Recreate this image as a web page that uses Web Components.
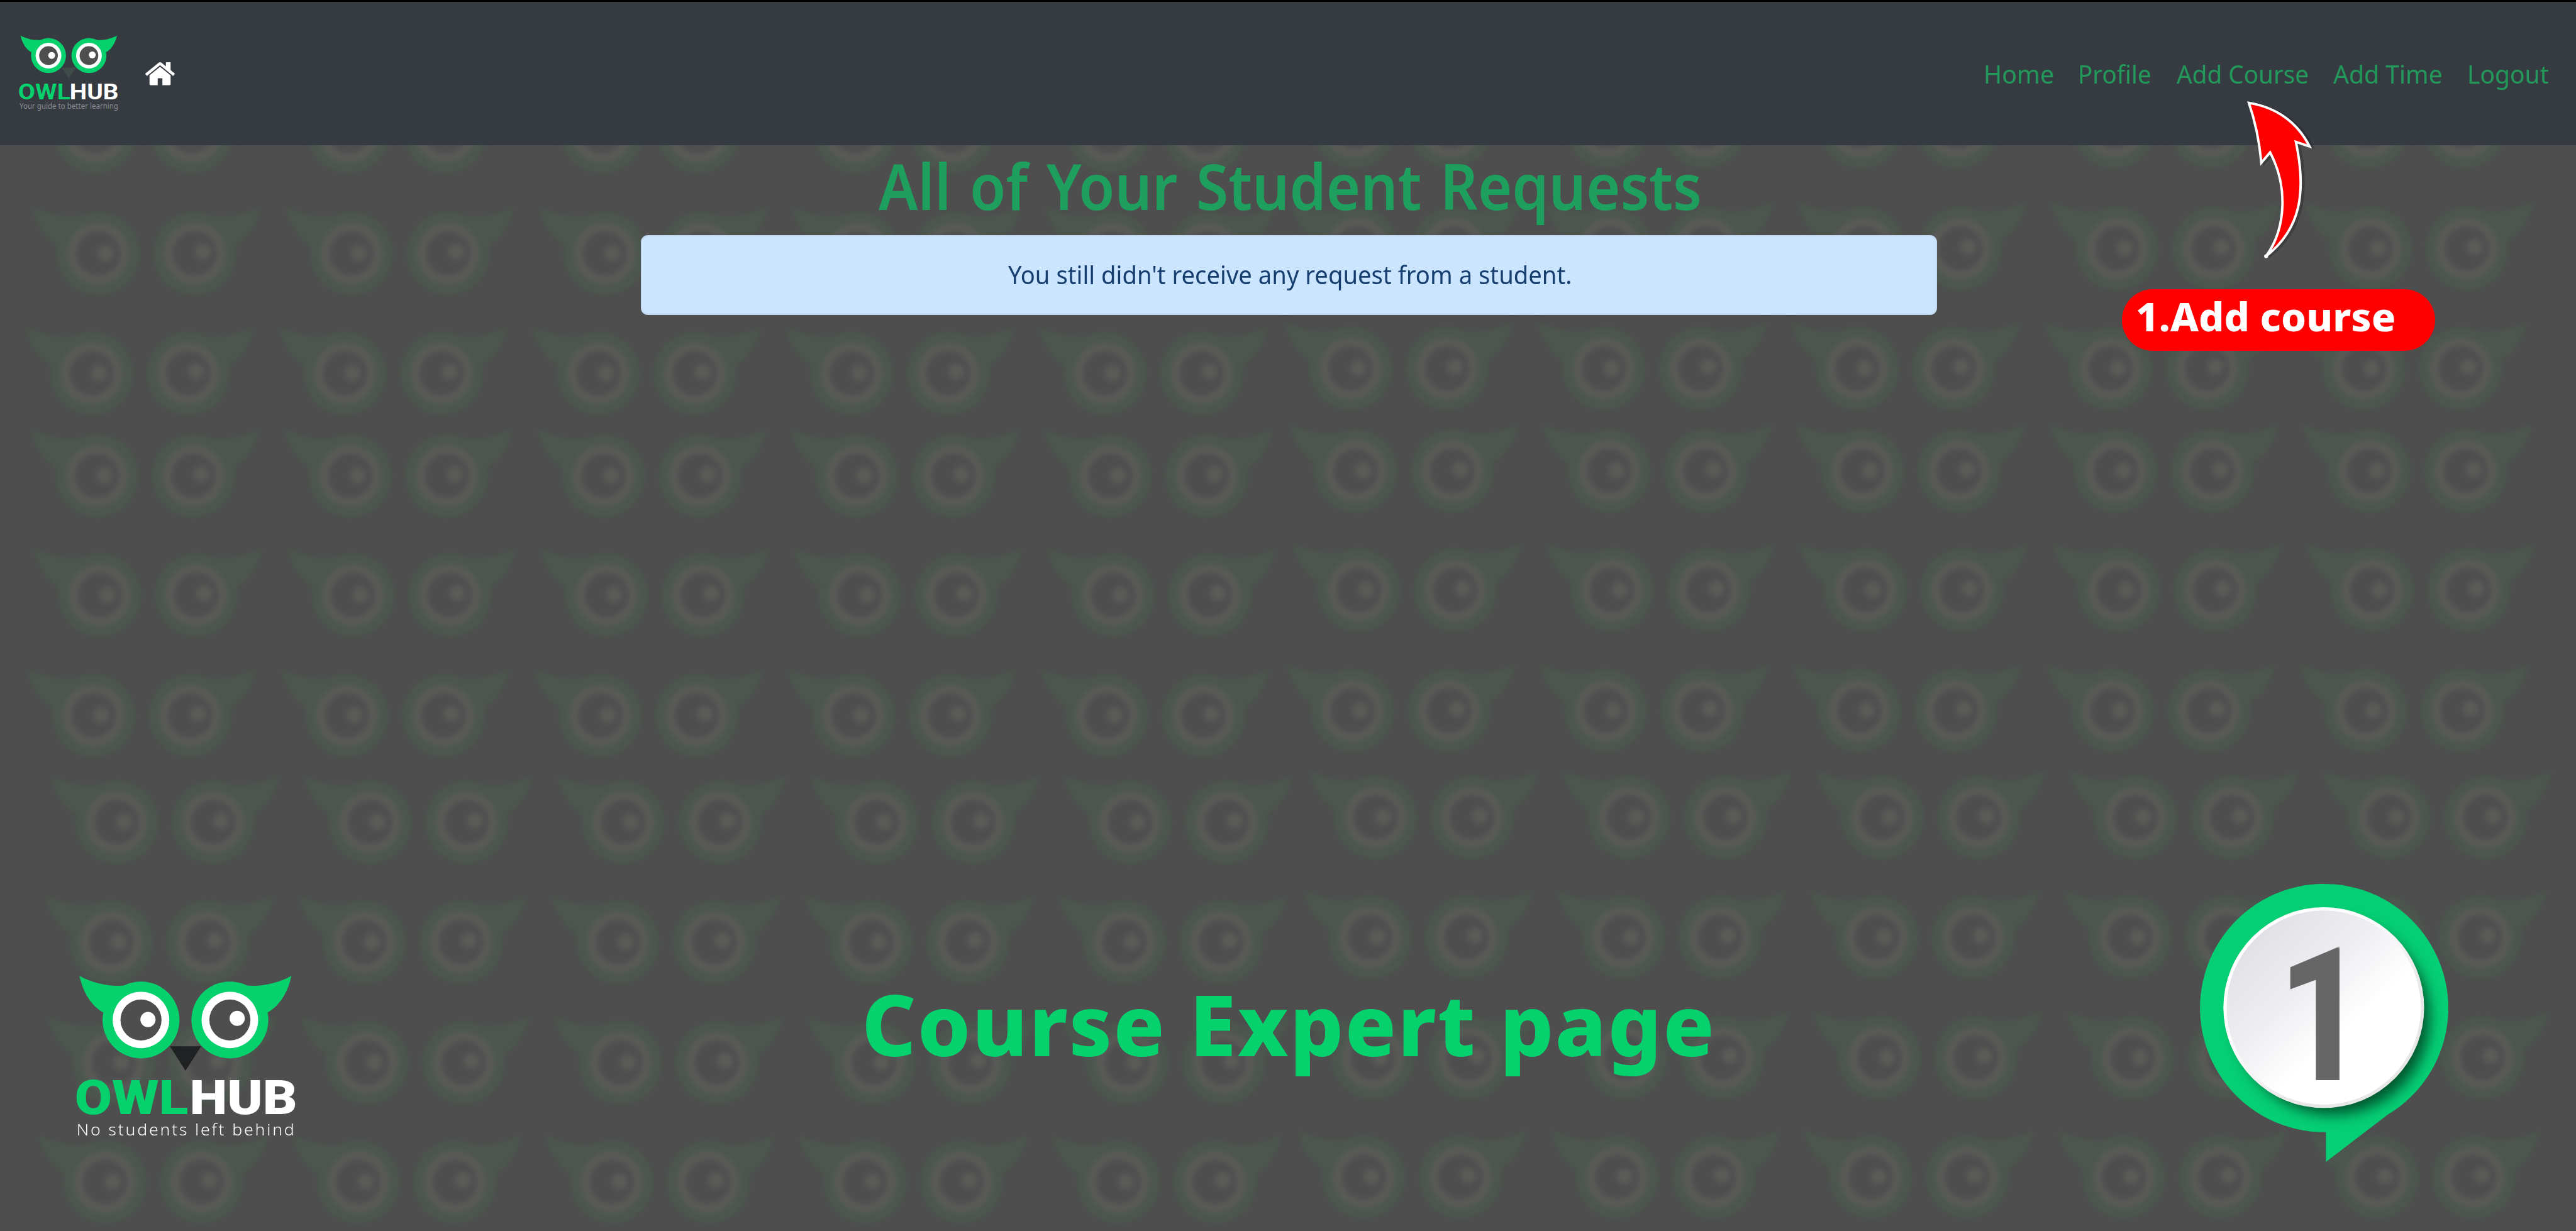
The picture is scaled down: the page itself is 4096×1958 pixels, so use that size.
<!DOCTYPE html>
<html lang="en">
<head>
<meta charset="utf-8">
<title>OwlHub – Course Expert page</title>
<style>
html,body{margin:0;padding:0;background:#4e4e4e}
body{width:4096px;height:1958px;overflow:hidden;font-family:"Noto Sans","Open Sans",sans-serif}
</style>
</head>
<body>
<expert-page></expert-page>
<script>
const define = (name, html, setup) => {
  const t = document.createElement('template');
  t.innerHTML = html.trim();
  customElements.define(name, class extends HTMLElement {
    connectedCallback() {
      if (this.shadowRoot) return;
      this.attachShadow({mode: 'open'}).appendChild(t.content.cloneNode(true));
      if (setup) setup.call(this, this.shadowRoot);
    }
  });
};

/* One line of text whose ink spans exactly the width given in the "w" attribute. */
const canvas = document.createElement('canvas').getContext('2d');
define('fit-text', `
<style>
:host{display:block;white-space:pre;flex:none}
span{display:block;width:max-content;transform-origin:0 50%}
</style><span><slot></slot></span>`, function (root) {
  const w = parseFloat(this.getAttribute('w'));
  this.style.width = w + 'px';
  const cs = getComputedStyle(this);
  canvas.font = `${cs.fontWeight} ${cs.fontSize} ${cs.fontFamily}`;
  canvas.letterSpacing = cs.letterSpacing === 'normal' ? '0px' : cs.letterSpacing;
  canvas.wordSpacing = cs.wordSpacing;
  const m = canvas.measureText(this.textContent);
  const s = w / (m.actualBoundingBoxLeft + m.actualBoundingBoxRight);
  root.querySelector('span').style.transform = `translateX(${m.actualBoundingBoxLeft * s}px) scaleX(${s})`;
});

const WING = 'M-189.5-136C-150-113-98-102-52-106L0 0-116-23C-155-45-178-85-189.500-136Z';
const eye = (x, hx, hy, g, w, p) => `<circle cx="${x}" r="118.3" fill="${g}"/><circle cx="${x}" r="87" fill="${w}"/><circle cx="${x}" r="63.2" fill="${p}"/><circle cx="${x + hx}" cy="${hy}" r="23.4" fill="${w}"/>`;
const owl = (g, w, p) => `<path d="${WING}" fill="${g}"/><path d="${WING}" fill="${g}" transform="matrix(-1 0 0 1 273.5 0)"/>${eye(0, 21.4, -1.2, g, w, p)}${eye(273.5, 22.5, -5, g, w, p)}`;

define('owl-face', `
<style>:host{display:block}svg{display:block;width:100%;height:100%}path.beak{fill:var(--beak,#1f2123)}</style>
<svg viewBox="-192 -138 658 296">${owl('#06d16d', '#fff', '#4e4e4e')}<path class="beak" d="M89 81H185L137 156Z"/></svg>`);

define('owl-logo', `
<style>
:host{display:flex;flex-direction:column;align-items:flex-start;color:#fff;flex:none}
owl-face{width:340px;height:153px;margin-left:4.2px}
.name{display:flex;gap:7.6px;margin-top:6.6px;font:900 75.5px/70px Roboto,sans-serif}
.green{color:#06d16d}
.tag{margin:0 0 0 3px;font:300 25px/30px "Noto Sans","Open Sans",sans-serif;letter-spacing:2.6px}
:host([compact]) owl-face{width:154.7px;height:69.6px;margin-left:2.6px;--beak:#3f4b48}
:host([compact]) .name{gap:1.6px;margin-top:3.3px;font:700 34.7px/34px Roboto,sans-serif}
:host([compact]) .tag{margin:-1.5px 0 0 1.5px;font:400 12px/14px "Noto Sans","Open Sans",sans-serif;letter-spacing:0;color:#8b8d93}
</style>
<owl-face></owl-face><div class="name"></div><div class="tag"></div>`, function (root) {
  const [a, b, c] = this.getAttribute('widths').split(' ');
  root.querySelector('.name').innerHTML = `<fit-text class="green" w="${a}">OWL</fit-text><fit-text w="${b}">HUB</fit-text>`;
  root.querySelector('.tag').innerHTML = `<fit-text w="${c}">${this.getAttribute('tagline')}</fit-text>`;
});

define('owl-backdrop', `
<style>:host{position:absolute;inset:0;display:block}svg{display:block;width:100%;height:100%}</style>
<svg viewBox="0 0 7926 3788" preserveAspectRatio="none"><defs><g id="o" transform="scale(1.086)">${owl('#4c564e', '#5a5a58', '#4e4e4e')}</g></defs><g class="all" style="filter:blur(8px)"></g></svg>`, function (root) {
  /* x and y of the first left eye in every row */
  const rows = [[293, 405], [302, 780], [282, 1149], [298, 1464], [307, 1831], [288, 2202], [359, 2530], [342, 2899], [350, 3270], [323, 3637]];
  let out = '';
  for (const [x, y] of rows)
    for (let i = 0; i < 10; i++)
      out += `<use href="#o" x="${x + i * 779.5 - (i > 4 ? 24 : 0)}" y="${y - (i > 4 ? 15 : 0)}"/>`;
  root.querySelector('.all').innerHTML = out;
});

define('nav-bar', `
<style>
:host{display:flex;box-sizing:border-box;height:231px;border-top:3px solid #000;background:#363a41;position:relative}
owl-logo{margin:53.3px 0 0 29.5px}
.home{display:block;width:47px;height:36.5px;margin:96px 0 0 43.4px}
nav{display:flex;margin:90px 43.4px 0 auto;font-size:39.3px;line-height:50px;color:#23985b}
</style>
<owl-logo compact widths="82.3 74.2 156.6" tagline="Your guide to better learning"></owl-logo>
<svg class="home" viewBox="25 253 1614 1283" preserveAspectRatio="none"><path fill="#fff" d="M1408 992v480q0 26-19 45t-45 19h-384v-384h-256v384h-384q-26 0-45-19t-19-45v-480q0-1 .5-3t.5-3l575-474 575 474q1 2 1 6zm223-69l-62 74q-8 9-21 11h-3q-13 0-21-7l-692-577-692 577q-12 8-24 7-13-2-21-11l-62-74q-8-10-7-23.500t11-21.500l719-599q32-26 76-26t76 26l244 204v-195q0-14 9-23t23-9h192q14 0 23 9t9 23v408l219 182q10 8 11 21.500t-7 23.500z"/></svg>
<nav>
<fit-text w="108">Home</fit-text>
<fit-text w="112.500" style="margin-left:42.500px">Profile</fit-text>
<fit-text w="209" style="margin-left:41.500px">Add Course</fit-text>
<fit-text w="172.600" style="margin-left:40px">Add Time</fit-text>
<fit-text w="126.600" style="margin-left:43.400px">Logout</fit-text>
</nav>`);

define('alert-box', `
<style>
:host{display:flex;justify-content:center;align-items:center;box-sizing:border-box;width:2061.500px;height:126.500px;border:2px solid #c3d9f1;border-radius:11px;background:#cbe5ff;color:#163f70;font-size:39.500px;line-height:50px}
</style><slot></slot>`);

define('step-pill', `
<style>
:host{display:flex;box-sizing:border-box;width:498px;height:98.500px;padding:13.500px 25px;border-radius:50px;background:#fe0000;color:#fff;font:800 63px/60px "Noto Sans","Open Sans",sans-serif;letter-spacing:0}
</style><slot></slot>`);

define('step-arrow', `
<style>:host{display:block}svg{display:block;width:100%;height:100%}</style>
<svg viewBox="6900 300 230 510"><defs><path id="a" d="M6919 316.700C7003 330 7068 376 7105.700 450.700L7063.700 436.700C7096 590 7080 704 6971.700 789C7036 700 7038 570 6984.300 469.300L6957.300 501C6951 430 6938 372 6919 316.700Z"/></defs>
<use href="#a" x="9" y="2" fill="#000" stroke="#000" stroke-width="7.500" opacity=".2"/>
<circle cx="6972" cy="788.500" r="6" fill="#fff"/>
<use href="#a" fill="#fe0000" stroke="#fff" stroke-width="7.500"/></svg>`);

define('step-badge', `
<style>:host{display:block;width:408.300px;height:454.800px;flex:none}svg{display:block;width:100%;height:100%}text{font-family:Roboto,sans-serif;font-weight:800}</style>
<svg viewBox="6760 2715 790 880">
<defs>
<path id="p" d="M7157.500 3486.500A382 382 0 1 1 7348.600 3432L7157.500 3578Z"/>
<clipPath id="c"><use href="#p"/></clipPath>
<linearGradient id="d" x1=".15" y1=".12" x2=".85" y2=".88"><stop offset="0" stop-color="#e0e0e6"/><stop offset=".35" stop-color="#eeeef2"/><stop offset=".65" stop-color="#fff"/></linearGradient>
<linearGradient id="r" x1=".15" y1=".12" x2=".85" y2=".88"><stop offset="0" stop-color="#fff"/><stop offset=".35" stop-color="#fcfcfc"/><stop offset=".75" stop-color="#e7e7e7"/></linearGradient>
<filter id="b" x="-20%" y="-20%" width="140%" height="140%"><feGaussianBlur stdDeviation="22"/></filter>
</defs>
<use href="#p" fill="#05cf74"/>
<g clip-path="url(#c)"><circle cx="7179" cy="3135" r="298" fill="#00542f" filter="url(#b)"/></g>
<circle cx="7150.700" cy="3103.300" r="308.900" fill="url(#r)"/>
<circle cx="7150.700" cy="3103.300" r="298.700" fill="url(#d)"/>
<text id="n" font-size="574" fill="#666">1</text>
</svg>`, function (root) {
  /* stretch the numeral so that its ink fills 156 units */
  canvas.font = '800 574px Roboto';
  canvas.letterSpacing = '0px';
  const m = canvas.measureText('1');
  const s = 156 / (m.actualBoundingBoxLeft + m.actualBoundingBoxRight);
  root.querySelector('text').setAttribute('transform', `translate(${7046 + m.actualBoundingBoxLeft * s} 3326.5) scale(${s} 1)`);
});

define('expert-page', `
<style>
:host{display:flex;flex-direction:column;position:relative;width:4096px;height:1958px;background:#4e4e4e;overflow:hidden}
main{display:flex;flex-direction:column;align-items:center;position:relative}
h1{margin:0;padding:3.500px 0 0 3px;height:143.200px;box-sizing:border-box;font:560 101px/120px "Noto Sans","Open Sans",sans-serif;word-spacing:6px;color:#1e9f5d}
alert-box{margin-left:3px}
.over{position:absolute}
step-arrow{left:3565.800px;top:155px;width:118.900px;height:263.600px}
step-pill{left:3374px;top:459.700px}
footer{display:flex;align-items:flex-start;position:relative;margin-top:auto;height:555px}
footer owl-logo{margin:148px 0 0 120.900px;width:349px}
h2{margin:135px 0 0 907px;font:800 134px/180px "Noto Sans","Open Sans",sans-serif;letter-spacing:2px;color:#06d16d}
step-badge{margin-left:773px;margin-top:-1px}
</style>
<owl-backdrop></owl-backdrop>
<nav-bar></nav-bar>
<main>
<h1><fit-text w="1305.500">All of Your Student Requests</fit-text></h1>
<alert-box><fit-text w="894">You still didn't receive any request from a student.</fit-text></alert-box>
</main>
<step-arrow class="over"></step-arrow>
<step-pill class="over"><fit-text w="408">1.Add course</fit-text></step-pill>
<footer>
<owl-logo widths="177.400 163.600 341.700" tagline="No students left behind"></owl-logo>
<h2><fit-text w="1343.600">Course Expert page</fit-text></h2>
<step-badge></step-badge>
</footer>`);
</script>
</body>
</html>
